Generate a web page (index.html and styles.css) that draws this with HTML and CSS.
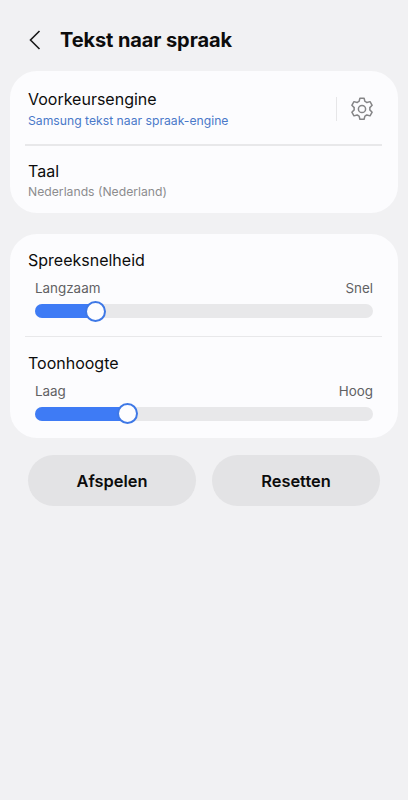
FILE: index.html
```html
<!DOCTYPE html>
<html>
    <head>
        <title>Tekst naar spraak</title>
        <link rel="stylesheet" href="styles.css">
    </head>
    <body>
        <div class="header">
            <svg class="back-icon" width="14" height="22" viewBox="0 0 14 22">
                <path d="M11.5 2 L2.5 11 L11.5 20" fill="none" stroke="#1a1a1a" stroke-width="1.6"/>
            </svg>
            <p class="title">Tekst naar spraak</p>
        </div>

        <div class="card engine-card">
            <div class="row engine-row">
                <div class="engine-text">
                    <p class="row-title">Voorkeursengine</p>
                    <p class="row-sub blue">Samsung tekst naar spraak-engine</p>
                </div>
                <div class="engine-action">
                    <div class="vline"></div>
                    <svg width="26" height="26" viewBox="0 0 26 26" fill="none" stroke="#858587" stroke-width="1.5" stroke-linejoin="round">
                        <path d="M10.9 2.2 h4.2 l0.8 3.2 a8 8 0 0 1 2 1.15 l3.15 -0.9 l2.1 3.65 l-2.35 2.3 a8 8 0 0 1 0 2.3 l2.35 2.3 l-2.1 3.65 l-3.15 -0.9 a8 8 0 0 1 -2 1.15 l-0.8 3.2 h-4.2 l-0.8 -3.2 a8 8 0 0 1 -2 -1.15 l-3.15 0.9 l-2.1 -3.65 l2.35 -2.3 a8 8 0 0 1 0 -2.3 l-2.35 -2.3 l2.1 -3.65 l3.15 0.9 a8 8 0 0 1 2 -1.15 z"/>
                        <circle cx="13" cy="13" r="3.6"/>
                    </svg>
                </div>
            </div>
            <div class="divider thick"></div>
            <div class="row taal-row">
                <p class="row-title">Taal</p>
                <p class="row-sub">Nederlands (Nederland)</p>
            </div>
        </div>

        <div class="card slider-card">
            <div class="slider-block">
                <p class="row-title">Spreeksnelheid</p>
                <div class="labels"><span>Langzaam</span><span>Snel</span></div>
                <div class="track">
                    <div class="fill" style="width: 60px"></div>
                    <div class="thumb"></div>
                </div>
            </div>
            <div class="divider"></div>
            <div class="slider-block second">
                <p class="row-title">Toonhoogte</p>
                <div class="labels"><span>Laag</span><span>Hoog</span></div>
                <div class="track">
                    <div class="fill" style="width: 91.5px"></div>
                    <div class="thumb"></div>
                </div>
            </div>
        </div>

        <div class="buttons">
            <button>Afspelen</button>
            <button>Resetten</button>
        </div>
    </body>
</html>
```

FILE: styles.css
```css
body {
    margin: 0;
    height: 800px;
    overflow: hidden;
    background-color: #f1f1f3;
    font-family: Inter, "Noto Sans", sans-serif;
    color: #0c0c0c;
}
p {
    margin: 0;
}
.header {
    display: flex;
    align-items: center;
    height: 22px;
    padding: 29px 0 20px 28px;
}
.back-icon {
    margin-right: 18px;
}
.title {
    font-size: 20px;
    font-weight: 700;
    letter-spacing: -0.1px;
}
.card {
    margin: 0 10px;
    background-color: #fcfcfe;
    border-radius: 27px;
}
.engine-card {
    height: 142px;
}
.row {
    padding-left: 18px;
}
.engine-row {
    display: flex;
    justify-content: space-between;
    align-items: center;
    height: 73px;
    padding: 2px 23px 0 18px;
    box-sizing: border-box;
}
.engine-text .row-sub {
    margin-top: 2px;
}
.engine-action {
    display: flex;
    align-items: center;
    gap: 12px;
}
.vline {
    width: 1px;
    height: 24px;
    background-color: #e6e6e8;
}
.row-title {
    font-size: 16px;
    line-height: 22px;
}
.row-sub {
    font-size: 12.2px;
    line-height: 18px;
    margin-top: 1px;
    color: #8c8c8e;
}
.blue {
    color: #4a79c9;
}
.divider {
    height: 1px;
    margin: 0 16px 0 15px;
    background-color: #e8e8ea;
}
.thick {
    height: 2px;
}
.taal-row {
    padding-top: 14px;
}
.slider-card {
    height: 204px;
    margin-top: 21px;
}
.slider-block {
    height: 102px;
    padding: 15px 25px 0 25px;
    box-sizing: border-box;
}
.slider-block .row-title {
    margin-left: -7px;
}
.labels {
    display: flex;
    justify-content: space-between;
    margin-top: 7px;
    font-size: 13.4px;
    line-height: 20px;
    color: #616163;
}
.track {
    display: flex;
    align-items: center;
    height: 14px;
    margin-top: 6px;
    border-radius: 7px;
    background-color: #e8e8ea;
}
.second .track {
    margin-top: 5.5px;
}
.fill {
    height: 14px;
    border-radius: 7px 0 0 7px;
    background-color: #3e7bf5;
}
.thumb {
    flex-shrink: 0;
    box-sizing: border-box;
    width: 21px;
    height: 21px;
    margin-left: -10px;
    border: 2px solid #3e78e6;
    border-radius: 50%;
    background-color: #fdfdff;
}
.buttons {
    display: flex;
    gap: 16px;
    margin: 16.5px 28px 0 28px;
}
.buttons button {
    flex: 1;
    height: 51px;
    padding-top: 2px;
    border: none;
    border-radius: 26px;
    background-color: #e3e3e5;
    color: #0c0c0c;
    font-family: Inter, "Noto Sans", sans-serif;
    font-size: 16.4px;
    font-weight: 600;
}
```
